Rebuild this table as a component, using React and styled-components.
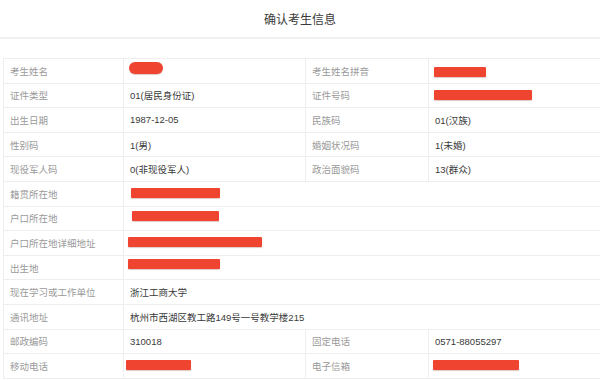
import React from "react"
import styled, { createGlobalStyle } from "styled-components"

const GlobalStyle = createGlobalStyle`
  html, body {
    margin: 0;
    padding: 0;
    background: #fff;
    overflow: hidden;
  }
  body {
    font-family: "Liberation Sans", "Noto Sans CJK SC", sans-serif;
  }
`

const Page = styled.div`
  width: 600px;
  height: 380px;
  overflow: hidden;
`

const TitleBar = styled.header`
  height: 37px;
  display: flex;
  align-items: center;
  justify-content: center;
  border-bottom: 2px solid #f1f1f1;
  font-size: 12px;
  color: #3a3a3a;
`

const Sheet = styled.div`
  margin: 19px 0 0 3px;
  width: 607px;
  display: grid;
  grid-template-columns: 120px 182px 123px 182px;
  grid-auto-rows: 24.6px;
  border-top: 1px solid #eee;
  border-left: 1px solid #eee;
`

const Cell = styled.div`
  display: flex;
  align-items: center;
  box-sizing: border-box;
  padding-left: 6px;
  border-right: 1px solid #eee;
  border-bottom: 1px solid #eee;
  font-size: 9.5px;
  color: ${({ $label }) => ($label ? "#9a9a9a" : "#3a3a3a")};
  white-space: nowrap;
  grid-column: ${({ $wide }) => ($wide ? "span 3" : "auto")};
`

const Redact = styled.span`
  display: inline-block;
  width: ${({ $w }) => $w}px;
  height: ${({ $h = 10 }) => $h}px;
  margin-left: ${({ $x = 0 }) => $x}px;
  margin-top: ${({ $y = 0 }) => $y}px;
  background: #ef4430;
  border-radius: ${({ $round }) => ($round ? "6px" : "1px")};
  box-shadow: 0 1px 1px rgba(120, 40, 30, 0.25);
`

const pairs = [
  ["考生姓名", <Redact $w={34} $h={12} $x={-1} $y={-5} $round />, "考生姓名拼音", <Redact $w={52} $x={-1} $y={3} />],
  ["证件类型", "01(居民身份证)", "证件号码", <Redact $w={98} $x={-1} $y={-1} />],
  ["出生日期", "1987-12-05", "民族码", "01(汉族)"],
  ["性别码", "1(男)", "婚姻状况码", "1(未婚)"],
  ["现役军人码", "0(非现役军人)", "政治面貌码", "13(群众)"],
]

const wideRows = [
  ["籍贯所在地", <Redact $w={89} $x={1} $y={-2} />],
  ["户口所在地", <Redact $w={87} $x={2} $y={-4} />],
  ["户口所在地详细地址", <Redact $w={134} $x={-2} $y={-1} />],
  ["出生地", <Redact $w={92} $x={-2} $y={-8} />],
  ["现在学习或工作单位", "浙江工商大学"],
  ["通讯地址", "杭州市西湖区教工路149号一号教学楼215"],
]

const tail = [
  ["邮政编码", "310018", "固定电话", "0571-88055297"],
  ["移动电话", <Redact $w={65} $x={-4} $y={-2} />, "电子信箱", <Redact $w={86} $x={-2} $y={-1} />],
]

const Quad = ({ row }) => (
  <>
    <Cell $label>{row[0]}</Cell>
    <Cell>{row[1]}</Cell>
    <Cell $label>{row[2]}</Cell>
    <Cell>{row[3]}</Cell>
  </>
)

const App = () => (
  <Page>
    <GlobalStyle />
    <TitleBar>确认考生信息</TitleBar>
    <Sheet>
      {pairs.map(row => <Quad key={row[0]} row={row} />)}
      {wideRows.map(([label, value]) => (
        <React.Fragment key={label}>
          <Cell $label>{label}</Cell>
          <Cell $wide>{value}</Cell>
        </React.Fragment>
      ))}
      {tail.map(row => <Quad key={row[0]} row={row} />)}
    </Sheet>
  </Page>
)

export default App
